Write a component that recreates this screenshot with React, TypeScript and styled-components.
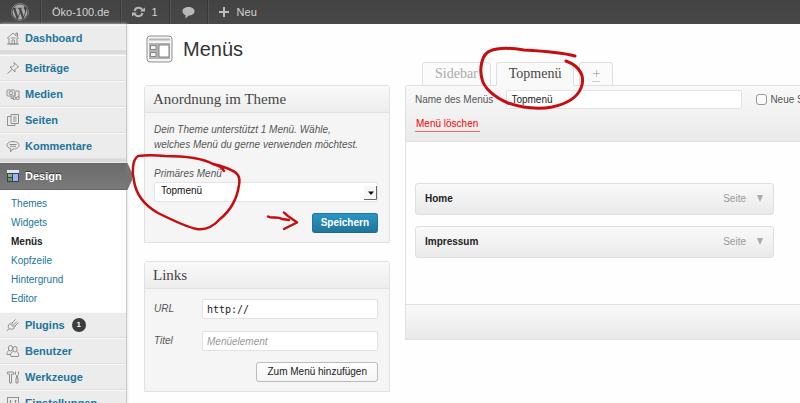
import React from "react";
import styled, { createGlobalStyle, css } from "styled-components";
import { FaWordpress } from "react-icons/fa";

const sans = `"Liberation Sans", Arial, Helvetica, sans-serif`;
const serif = `"Liberation Serif", Georgia, serif`;

const GlobalStyle = createGlobalStyle`
  *, *::before, *::after { box-sizing: border-box; }
  body { margin: 0; background: #fefefe; color: #333; font: 10px/16px ${sans}; }
  button, input, select { font: inherit; color: inherit; }
  a { text-decoration: none; }
`;

const App = styled.div`
  height: 100vh;
  overflow: hidden;
  display: flex;
  flex-direction: column;
`;

/* Admin bar */

const AdminBar = styled.nav`
  flex: none;
  display: flex;
  height: 24px;
  background: linear-gradient(#434343, #484848);
`;

const BarLink = styled.a`
  display: flex;
  align-items: center;
  gap: 6px;
  padding: 0 11px;
  font-size: 11px;
  color: #d4d4d4;
  border-right: 1px solid #383838;
  box-shadow: 1px 0 0 #555;

  &:last-child {
    gap: 8px;
    border-right: 0;
    box-shadow: none;
  }
`;

/* Sidebar */

const Columns = styled.div`
  flex: 1;
  min-height: 0;
  display: flex;
`;

const Sidebar = styled.aside`
  flex: none;
  width: 127px;
  padding-top: 1px;
  background: #ececec;
  border-right: 1px solid #c9c9c9;
  box-shadow: 0 0 3px #d8d8d8;
`;

const MenuSection = styled.ul`
  list-style: none;
  margin: 0;
  padding: 0;
  & + & {
    padding-top: 1px;
    border-top: 3px solid #dadada;
  }
`;

const MenuLink = styled.a<{ $current?: boolean }>`
  display: flex;
  align-items: center;
  gap: 5px;
  height: 26px;
  padding: 0 6px 1px 6px;
  font-size: 11px;
  font-weight: bold;
  color: #21759b;
  border-top: 1px solid #f9f9f9;
  border-bottom: 1px solid #dfdfdf;

  svg {
    flex: none;
  }

  ${(p) =>
    p.$current &&
    css`
      position: relative;
      height: 27px;
      color: #fff;
      text-shadow: 0 -1px 0 #333;
      background: linear-gradient(#6b6b6b, #7a7a7a);
      border-color: #666;

      &::after {
        content: "";
        position: absolute;
        left: 100%;
        top: -1px;
        width: 6px;
        height: 27px;
        background: #747474;
        clip-path: polygon(0 0, 25% 0, 100% 36%, 100% 64%, 25% 100%, 0 100%);
      }
    `}
`;

const SubMenu = styled.ul`
  list-style: none;
  margin: 0;
  padding: 4px 0 4px 11px;
  background: #fff;
  line-height: 19px;
`;

const SubLink = styled.a<{ $current?: boolean }>`
  color: ${(p) => (p.$current ? "#222" : "#21759b")};
  font-weight: ${(p) => (p.$current ? "bold" : "normal")};
`;

const Count = styled.span`
  display: grid;
  place-items: center;
  width: 14px;
  height: 14px;
  margin-left: 2px;
  border-radius: 50%;
  background: #3c3c3c;
  color: #fff;
  font-size: 8px;
  line-height: 14px;
`;

/* Content */

const Main = styled.main`
  flex: 1;
  min-width: 0;
  padding: 10px 0 0 17px;
`;

const PageTitle = styled.h1`
  display: flex;
  align-items: center;
  gap: 9px;
  height: 30px;
  margin: 0;
  padding-left: 2px;
  font-size: 20px;
  font-weight: normal;
  color: #333;
`;

const Editor = styled.div`
  display: flex;
  gap: 15px;
`;

const PanelColumn = styled.div`
  flex: none;
  width: 246px;
  padding-top: 21px;
  display: flex;
  flex-direction: column;
  gap: 18px;
`;

const Panel = styled.section`
  background: #f5f5f5;
  border: 1px solid #e1e1e1;
  border-radius: 3px 3px 0 0;
`;

const PanelTitle = styled.h2`
  margin: 0;
  padding: 0 8px;
  font: 15px/26px ${serif};
  color: #464646;
  background: linear-gradient(#f9f9f9, #ededed);
  border-bottom: 1px solid #e1e1e1;
`;

const PanelBody = styled.form`
  display: flex;
  flex-direction: column;
  padding: 9px 11px 9px 9px;
`;

const Hint = styled.p`
  margin: 0 0 14px;
  line-height: 15px;
  font-style: italic;
  color: #555;
`;

const ItalicLabel = styled.label`
  font-style: italic;
  color: #555;
`;

const SelectBox = styled.div`
  position: relative;
  margin-bottom: 11px;

  svg {
    position: absolute;
    right: 1px;
    top: 4px;
    pointer-events: none;
  }
`;

const Select = styled.select`
  display: block;
  appearance: none;
  width: 100%;
  height: 20px;
  padding: 0 6px 4px;
  background: #fff;
  border: 1px solid #e4e4e4;
  border-radius: 2px;
  color: #111;
`;

const Field = styled.div`
  display: flex;
  align-items: center;
  margin: 1px 0 11px;

  label {
    width: 48px;
  }
`;

const TextInput = styled.input<{ $mono?: boolean }>`
  flex: 1;
  min-width: 0;
  height: 20px;
  padding: 0 4px;
  background: #fff;
  border: 1px solid #e2e2e2;
  border-radius: 2px;
  color: #222;
  ${(p) => p.$mono && `font-family: "DejaVu Sans Mono", monospace;`}

  &::placeholder {
    color: #999;
    font-style: italic;
  }
`;

const Button = styled.button<{ $primary?: boolean }>`
  align-self: flex-end;
  height: 20px;
  padding: 0 10px;
  border: 1px solid #bbb;
  border-radius: 3px;
  background: linear-gradient(#fefefe, #f4f4f4);
  color: #222;
  line-height: 14px;

  ${(p) =>
    p.$primary &&
    css`
      padding: 0 8px;
      font-weight: bold;
      color: #fff;
      background: linear-gradient(#2a95c5, #21759b);
      border-color: #21759b #21759b #1e6a8d;
    `}
`;

/* Menu structure */

const MenuArea = styled.div`
  flex: 1;
  min-width: 0;
  margin-top: -2px;
`;

const Tabs = styled.div`
  display: flex;
  gap: 5px;
  padding-left: 17px;
`;

const Tab = styled.button<{ $active?: boolean }>`
  height: 24px;
  margin: 0 0 -1px;
  padding: 0 12px;
  font: 14px/20px ${serif};
  color: ${(p) => (p.$active ? "#464646" : "#aaa")};
  background: ${(p) => (p.$active ? "#f9f9f9" : "#fbfbfb")};
  border: 1px solid #dfdfdf;
  border-bottom-color: ${(p) => (p.$active ? "#f9f9f9" : "#dfdfdf")};
  border-radius: 3px 3px 0 0;
  z-index: 1;
`;

const PlusMark = styled.span`
  display: block;
  width: 8px;
  line-height: 15px;
  border-bottom: 1px solid #ccc;
`;

const MenuFrame = styled.section`
  border: 1px solid #dfdfdf;
  border-right: 0;
  border-radius: 3px 0 0 0;
  background: #fefefe;
`;

const MenuHeader = styled.header`
  height: 56px;
  padding: 4px 0 0 9px;
  background: linear-gradient(#f9f9f9, #eaeaea);
  border-bottom: 1px solid #dfdfdf;
  overflow: hidden;
`;

const NameRow = styled.div`
  display: flex;
  align-items: center;
  margin-bottom: 7px;
  white-space: nowrap;

  > label {
    color: #555;
  }
`;

const NameInput = styled(TextInput)`
  flex: 0 0 236px;
  height: 19px;
  margin: 0 14px 0 13px;
`;

const CheckLabel = styled.label`
  display: flex;
  align-items: center;
  gap: 3px;

  input {
    appearance: none;
    width: 11px;
    height: 11px;
    margin: 0;
    border: 1px solid #999;
    border-radius: 3px;
    background: #fafafa;
  }
`;

const DeleteLink = styled.a`
  display: inline-block;
  padding: 0 2px 0 1px;
  color: #f00;
  line-height: 15px;
  border-bottom: 1px solid #f66;
`;

const MenuItems = styled.ol`
  list-style: none;
  margin: 0;
  padding: 41px 26px 46px 9px;
  display: flex;
  flex-direction: column;
  gap: 11px;
`;

const MenuItem = styled.li`
  display: flex;
  align-items: center;
  gap: 7px;
  height: 32px;
  padding: 0 6px 1px 9px;
  color: #999;
  background: linear-gradient(#f9f9f9, #eaeaea);
  border: 1px solid #dfdfdf;
  border-radius: 3px;

  strong {
    flex: 1;
    color: #222;
  }
`;

const ItemToggle = styled.button`
  display: grid;
  place-items: center;
  width: 14px;
  height: 20px;
  padding: 0;
  border: 0;
  background: none;
`;

const MenuFooter = styled.footer`
  height: 35px;
  background: linear-gradient(#f9f9f9, #e9e9e9);
  border-top: 1px solid #dfdfdf;
`;

const Annotations = styled.svg`
  position: absolute;
  left: 0;
  top: 0;
  z-index: 2;
  pointer-events: none;
`;

/* Icons */

const glyphs: Record<string, React.ReactNode> = {
  home: (
    <>
      <path d="M1 7.500 7 2l6 5.500" />
      <path d="M3 7v6h8V7M10 4V2h1.500v3.200M6 13V9h2.500v4M5 7h4.500" />
      <path d="M1 13h12" />
    </>
  ),
  pin: <path d="M8 1.500 12.500 6l-1.500.5-2 2 0 2.500L4 6l2.500-.2 2-2zM6 8.500 1.500 12.500" />,
  media: (
    <>
      <rect x="1" y="3" width="8" height="6" rx="1" />
      <circle cx="5" cy="6" r="1.800" />
      <path d="M10 4h3v7M9 9.500V5M5 9v2.500h3" />
      <circle cx="8.200" cy="11.200" r="1.500" />
      <circle cx="11.800" cy="11.200" r="1.500" />
    </>
  ),
  pages: (
    <>
      <path d="M5 1.500h7.500v9H5z" />
      <path d="M4.500 3.500h-3v9H9V11M7 4h3.500M7 6h3.500M7 8h3.500" />
    </>
  ),
  comments: (
    <>
      <path d="M7 2.500c3.500 0 6 1.600 6 3.700S10.500 10 7 10L4.500 12.800 4.800 9.600C2.500 9 1 7.800 1 6.200c0-2.100 2.500-3.700 6-3.700z" />
      <path d="M3.500 5.500h7M4 7.300h6" />
    </>
  ),
  plugin: (
    <>
      <path d="M4 5.500 8.500 10c-2 1.800-4.300 1.500-5.500.4S2 7.300 4 5.500z" />
      <path d="M5 4.500 9.500 9M6 5l3.500-3.500M9 8l3.500-3.500M3 10.500l-1.800 2.300M8 6.500l3-3" />
    </>
  ),
  users: (
    <>
      <rect x="2.500" y="1.500" width="4" height="5.500" rx="2" />
      <rect x="7" y="2.500" width="4" height="5.500" rx="2" />
      <path d="M2.800 6.500C1.200 7.500.7 9 1 10.500h3.500M6.800 7.500C4.800 8.500 4 10.500 5 12.500h7.500c.8-2 0-4-1.700-5" />
    </>
  ),
  tools: (
    <path d="M1.500 4V2H7l1 1.200v1H5.500V13h-2V4zM9.500 1.500v3l1 1V8M12.500 1.500v3l-1 1V8M10 8h2v5h-2z" />
  ),
  settings: (
    <>
      <rect x="1.500" y="1.500" width="11" height="11" />
      <path d="M4.500 4v6M9.500 4v6M3.500 5.500h2M8.500 4.500h2M8.500 8h2M3.500 9h2" />
    </>
  ),
};

const MenuIcon = ({ name }: { name: string }) => (
  <svg width="14" height="14" viewBox="0 0 14 14" fill="none" stroke="#8f8f8f" aria-hidden="true">
    {glyphs[name]}
  </svg>
);

const DesignIcon = () => (
  <svg width="14" height="14" viewBox="0 0 14 14" aria-hidden="true">
    <rect x="1" y="1" width="12" height="12" fill="#35405c" />
    <rect x="1" y="1" width="12" height="3" fill="#dfe5f2" />
    <rect x="2" y="5" width="4" height="3" fill="#7fba6c" />
    <rect x="2" y="9" width="4" height="3" fill="#58a055" />
    <rect x="7" y="5" width="5" height="7" fill="#9db2f0" />
  </svg>
);

const ThemeIcon = () => (
  <svg width="28" height="28" viewBox="0 0 28 28" aria-hidden="true">
    <rect x="1" y="1" width="25" height="26" rx="3" fill="#f4f4f4" stroke="#8f8f8f" />
    <path d="M3 4.500h21" stroke="#b5b5b5" strokeWidth="2" />
    <rect x="3" y="8" width="21" height="16" fill="#b4b4b4" />
    <path d="M4.500 10.500h5.500v4H4.500zM4.500 17.500h5.500v4H4.500z" fill="#f4f4f4" stroke="#858585" />
    <rect x="13" y="10" width="10" height="12" fill="#fff" stroke="#848484" />
  </svg>
);

const sections = [
  [{ icon: "home", label: "Dashboard" }],
  [
    { icon: "pin", label: "Beiträge" },
    { icon: "media", label: "Medien" },
    { icon: "pages", label: "Seiten" },
    { icon: "comments", label: "Kommentare" },
  ],
];

const designPages = ["Themes", "Widgets", "Menüs", "Kopfzeile", "Hintergrund", "Editor"];

const lowerItems = [
  { icon: "plugin", label: "Plugins", count: 1 },
  { icon: "users", label: "Benutzer" },
  { icon: "tools", label: "Werkzeuge" },
  { icon: "settings", label: "Einstellungen" },
];

export default function MenusPage() {
  return (
    <App>
      <GlobalStyle />
      <AdminBar aria-label="Werkzeugleiste">
        <BarLink href="#" aria-label="WordPress">
          <FaWordpress size={18} color="#a9a9a9" />
        </BarLink>
        <BarLink href="#">Öko-100.de</BarLink>
        <BarLink href="#">
          <svg width="13" height="12" viewBox="0 0 13 12" fill="none" stroke="#b5b5b5" strokeWidth="2" aria-hidden="true">
            <path d="M2.500 5a4.200 4.200 0 0 1 8-.5M10.500 7a4.200 4.200 0 0 1-8 .5" />
            <path d="M8 5.500h5V1.500zM0 6.500h5L0 10.500z" fill="#b5b5b5" stroke="none" />
          </svg>
          1
        </BarLink>
        <BarLink href="#" aria-label="Kommentare">
          <svg width="15" height="14" viewBox="0 0 15 14" aria-hidden="true">
            <path d="M7.500 2C11 2 13.500 3.700 13.500 6.200S11 10.500 7.800 10.500L4.500 13.500V10C2.500 9.300 1.500 8 1.500 6.200 1.500 3.700 4 2 7.500 2z" fill="#b9b9b9" />
          </svg>
        </BarLink>
        <BarLink href="#">
          <svg width="10" height="10" viewBox="0 0 10 10" aria-hidden="true">
            <path d="M5 0v10M0 5h10" stroke="#bdbdbd" strokeWidth="2" />
          </svg>
          Neu
        </BarLink>
      </AdminBar>

      <Columns>
        <Sidebar>
          {sections.map((items) => (
            <MenuSection key={items[0].label}>
              {items.map((item) => (
                <li key={item.label}>
                  <MenuLink href="#">
                    <MenuIcon name={item.icon} />
                    {item.label}
                  </MenuLink>
                </li>
              ))}
            </MenuSection>
          ))}
          <MenuSection>
            <li>
              <MenuLink href="#" $current>
                <DesignIcon />
                Design
              </MenuLink>
              <SubMenu>
                {designPages.map((page) => (
                  <li key={page}>
                    <SubLink href="#" $current={page === "Menüs"}>
                      {page}
                    </SubLink>
                  </li>
                ))}
              </SubMenu>
            </li>
            {lowerItems.map((item) => (
              <li key={item.label}>
                <MenuLink href="#">
                  <MenuIcon name={item.icon} />
                  {item.label}
                  {item.count && <Count>{item.count}</Count>}
                </MenuLink>
              </li>
            ))}
          </MenuSection>
        </Sidebar>

        <Main>
          <PageTitle>
            <ThemeIcon />
            Menüs
          </PageTitle>
          <Editor>
            <PanelColumn>
              <Panel>
                <PanelTitle>Anordnung im Theme</PanelTitle>
                <PanelBody>
                  <Hint>
                    Dein Theme unterstützt 1 Menü. Wähle,
                    <br />
                    welches Menü du gerne verwenden möchtest.
                  </Hint>
                  <ItalicLabel htmlFor="primary">Primäres Menü</ItalicLabel>
                  <SelectBox>
                    <Select id="primary">
                      <option>Topmenü</option>
                    </Select>
                    <svg width="13" height="14" viewBox="0 0 13 14" aria-hidden="true">
                      <path d="M0 0h13v14H0z" fill="#f6f6f6" />
                      <path d="M0 13.500h12.500V0" fill="none" stroke="#666" />
                      <path d="M4 5.500h6L7 9z" fill="#111" />
                    </svg>
                  </SelectBox>
                  <Button type="button" $primary>
                    Speichern
                  </Button>
                </PanelBody>
              </Panel>

              <Panel>
                <PanelTitle>Links</PanelTitle>
                <PanelBody>
                  <Field>
                    <ItalicLabel htmlFor="url">URL</ItalicLabel>
                    <TextInput id="url" defaultValue="http://" $mono />
                  </Field>
                  <Field>
                    <ItalicLabel htmlFor="title">Titel</ItalicLabel>
                    <TextInput id="title" placeholder="Menüelement" />
                  </Field>
                  <Button type="button">Zum Menü hinzufügen</Button>
                </PanelBody>
              </Panel>
            </PanelColumn>

            <MenuArea>
              <Tabs>
                <Tab>Sidebar</Tab>
                <Tab $active>Topmenü</Tab>
                <Tab aria-label="Menü hinzufügen">
                  <PlusMark>+</PlusMark>
                </Tab>
              </Tabs>
              <MenuFrame>
                <MenuHeader>
                  <NameRow>
                    <label htmlFor="name">Name des Menüs</label>
                    <NameInput id="name" defaultValue="Topmenü" />
                    <CheckLabel>
                      <input type="checkbox" />
                      Neue Seiten automatisch hinzufügen
                    </CheckLabel>
                  </NameRow>
                  <DeleteLink href="#">Menü löschen</DeleteLink>
                </MenuHeader>
                <MenuItems>
                  {["Home", "Impressum"].map((title) => (
                    <MenuItem key={title}>
                      <strong>{title}</strong>
                      Seite
                      <ItemToggle aria-label={`${title} bearbeiten`}>
                        <svg width="6" height="7" viewBox="0 0 6 7" aria-hidden="true">
                          <path d="M0 0h6L3 7z" fill="#aaa" />
                        </svg>
                      </ItemToggle>
                    </MenuItem>
                  ))}
                </MenuItems>
                <MenuFooter />
              </MenuFrame>
            </MenuArea>
          </Editor>
        </Main>
      </Columns>

      <Annotations width="620" height="250" viewBox="0 0 620 250" fill="none" stroke="#c80d10" strokeWidth="2.500" strokeLinecap="round" strokeLinejoin="round" aria-hidden="true">
        <path d="M224 171C222 167 217 165 213 164C202 158 184 156 165 156C155 155 145 155 138 156C132 160 132 173 134 181C136 194 144 205 158 213C170 219 186 227 197 229C205 230 213 227 220 219C230 211 237 199 239 185C241 175 236 172 229 169C224 167 219 165 213 164" />
        <path d="M268 216.500C272 219 277 216 282 219L289 220M284 212.500C288 217 293 219 297 222.500L284 229" />
        <path d="M575 56C560 52 542 51 524 50C512 48 499 47 490 51C482 54 479 68 482 79C484 88 494 97 508 103C520 107 536 110 552 107C566 104 577 98 581 88C585 78 582 67 566 61" strokeWidth="3" />
      </Annotations>
    </App>
  );
}
